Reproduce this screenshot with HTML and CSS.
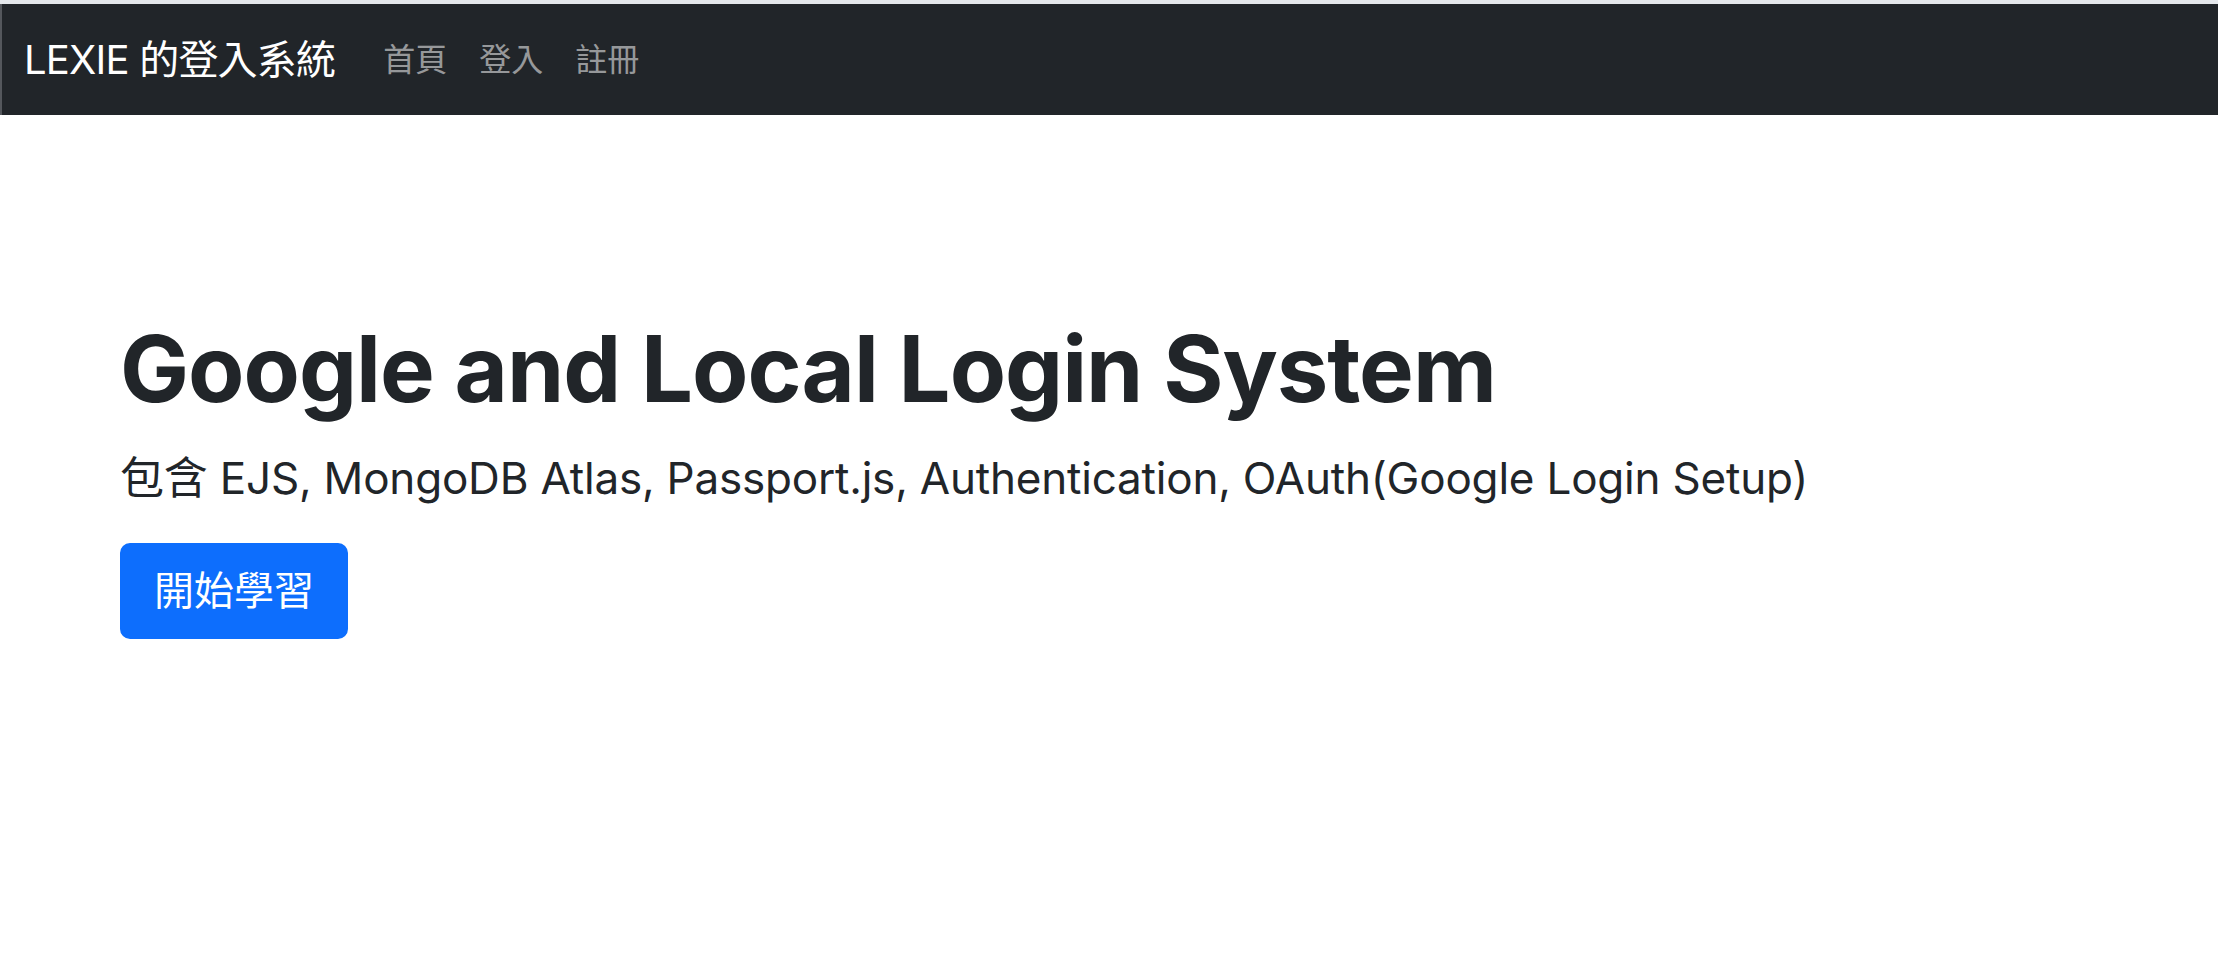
FILE: index.html
```html
<!DOCTYPE html>
<html lang="zh-Hant">
<head>
<meta charset="utf-8">
<title>LEXIE 的登入系統</title>
<link rel="stylesheet" href="styles.css">
</head>
<body>
<div class="top-strip"></div>
<nav class="navbar">
  <div class="nav-inner">
    <a class="brand" href="#">LEXIE 的登入系統</a>
    <ul class="nav">
      <li><a class="nav-link" href="#">首頁</a></li>
      <li><a class="nav-link" href="#">登入</a></li>
      <li><a class="nav-link" href="#">註冊</a></li>
    </ul>
  </div>
</nav>
<main class="hero">
  <h1 class="title">Google and Local Login System</h1>
  <p class="lead">包含 EJS, MongoDB Atlas, Passport.js, Authentication, OAuth(Google Login Setup)</p>
  <a class="btn" href="#">開始學習</a>
</main>
</body>
</html>
```

FILE: styles.css
```css
* { box-sizing: border-box; }
html, body { margin: 0; padding: 0; background: #fff; }
body {
  font-family: Inter, "Noto Sans CJK TC", sans-serif;
  color: #212529;
}
.top-strip {
  height: 4px;
  background: #e4e7eb;
}
.navbar {
  background: #212529;
  height: 111px;
  border-left: 2px solid #54575c;
  display: flex;
  align-items: center;
}
.nav-inner {
  display: flex;
  align-items: center;
  padding: 0 22px;
}
.brand {
  font-size: 40px;
  line-height: 60px;
  color: #fff;
  text-decoration: none;
  margin-right: 32px;
  white-space: nowrap;
  letter-spacing: -0.8px;
}
.nav {
  display: flex;
  list-style: none;
  margin: 0;
  padding: 0;
}
.nav-link {
  display: block;
  font-size: 32px;
  line-height: 48px;
  padding: 16px;
  color: rgba(255, 255, 255, 0.55);
  text-decoration: none;
}
.hero {
  padding: 199px 120px 0;
}
.title {
  margin: 0 0 21px;
  font-size: 92px;
  line-height: 110px;
  font-weight: 700;
  letter-spacing: -1px;
}
.lead {
  margin: 0 0 32px;
  font-size: 44px;
  line-height: 66px;
  font-weight: 400;
  letter-spacing: -0.2px;
}
.btn {
  display: inline-block;
  background: #0d6efd;
  color: #fff;
  font-size: 40px;
  line-height: 60px;
  padding: 16px 32px;
  border: 2px solid #0d6efd;
  border-radius: 10px;
  text-decoration: none;
}
```
